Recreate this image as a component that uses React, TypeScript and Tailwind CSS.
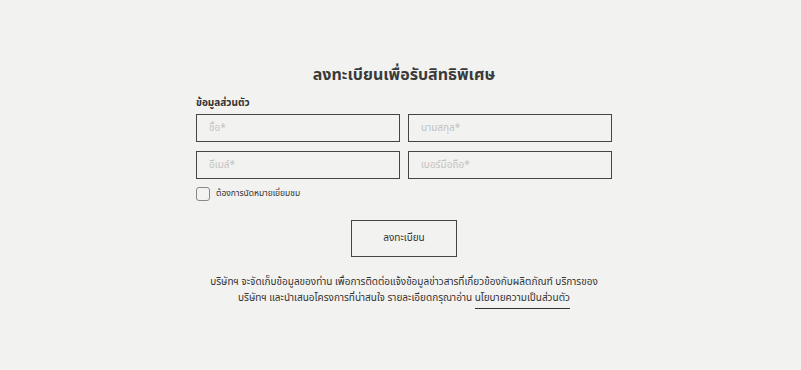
export default function App() {
  return (
    <div
      className="min-h-[370px] w-full bg-[#f2f2f0] text-[#333] flex justify-center pl-[7px]"
      style={{ fontFamily: '"Noto Sans Thai", "Noto Sans", "Liberation Sans", sans-serif' }}
    >
      <div className="w-[416px] pt-[62px] flex flex-col">
        <h2 className="text-center text-[16px] font-bold leading-[26px] text-[#3a3a3a]">
          ลงทะเบียนเพื่อรับสิทธิพิเศษ
        </h2>
        <div className="mt-[8px] text-[10px] font-bold leading-[14px]">ข้อมูลส่วนตัว</div>
        <div className="mt-[4px] grid grid-cols-2 gap-x-[8px] gap-y-[9px]">
          <input
            placeholder="ชื่อ*"
            className="h-[28px] border border-[#444] bg-transparent px-[12px] text-[10px] placeholder:text-[#c2c2c2] outline-none"
          />
          <input
            placeholder="นามสกุล*"
            className="h-[28px] border border-[#444] bg-transparent px-[12px] text-[10px] placeholder:text-[#c2c2c2] outline-none"
          />
          <input
            placeholder="อีเมล์*"
            className="h-[28px] border border-[#444] bg-transparent px-[12px] text-[10px] placeholder:text-[#c2c2c2] outline-none"
          />
          <input
            placeholder="เบอร์มือถือ*"
            className="h-[28px] border border-[#444] bg-transparent px-[12px] text-[10px] placeholder:text-[#c2c2c2] outline-none"
          />
        </div>
        <label className="mt-[8px] flex items-center gap-[6px] text-[8.5px] leading-[14px]">
          <span className="w-[14px] h-[14px] rounded-[3px] border border-[#888] bg-transparent" />
          ต้องการนัดหมายเยี่ยมชม
        </label>
        <div className="mt-[19px] flex justify-center">
          <button className="w-[106px] h-[37px] border border-[#444] text-[10px] text-[#333]">
            ลงทะเบียน
          </button>
        </div>
        <p className="mt-[17px] text-center text-[10px] leading-[16px] w-[440px] -mx-[12px]">
          บริษัทฯ จะจัดเก็บข้อมูลของท่าน เพื่อการติดต่อแจ้งข้อมูลข่าวสารที่เกี่ยวข้องกับผลิตภัณฑ์ บริการของ
          <br />
          บริษัทฯ และนำเสนอโครงการที่น่าสนใจ รายละเอียดกรุณาอ่าน{" "}
          <a className="border-b border-[#333] pb-[2px]">นโยบายความเป็นส่วนตัว</a>
        </p>
      </div>
    </div>
  );
}
